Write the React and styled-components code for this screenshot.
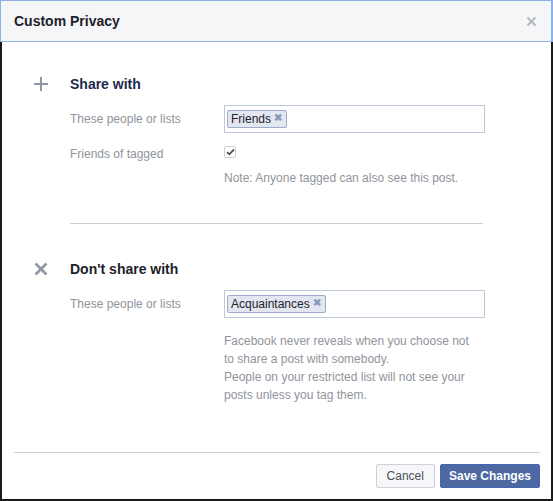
import React from 'react';
import styled, { createGlobalStyle } from 'styled-components';

const GlobalStyle = createGlobalStyle`
  html, body {
    margin: 0;
    padding: 0;
    background: #ffffff;
  }
  body {
    font-family: "Liberation Sans", Arial, Helvetica, sans-serif;
  }
`;

const Dialog = styled.div`
  width: 553px;
  height: 501px;
  box-sizing: border-box;
  display: flex;
  flex-direction: column;
  background: #fff;
`;

const Header = styled.div`
  height: 42px;
  box-sizing: border-box;
  border: 1px solid #8fb1e9;
  border-right-width: 2px;
  background: #f5f6f7;
  display: flex;
  align-items: center;
  justify-content: space-between;
  padding: 0 13px 0 13px;
`;

const HeaderTitle = styled.div`
  font-size: 14px;
  font-weight: bold;
  color: #1d2129;
  margin-top: -1px;
`;

const CloseIcon = styled.svg`
  width: 11px;
  height: 11px;
  margin-right: 1px;
`;

const Body = styled.div`
  flex: 1;
  display: flex;
  flex-direction: column;
  border-left: 2px solid #1a1a1a;
  border-right: 2px solid #1a1a1a;
  border-bottom: 2px solid #1a1a1a;
`;

const Content = styled.div`
  flex: 1;
  padding: 32px 0 0 32px;
`;

const Section = styled.div`
  display: grid;
  grid-template-columns: 36px 154px 261px;
  align-items: start;
  margin-top: ${p => p.$top || 0}px;
`;

const SectionIcon = styled.div`
  height: 20px;
  display: flex;
  align-items: center;
`;

const SectionTitle = styled.div`
  grid-column: 2 / 4;
  font-size: 14px;
  font-weight: bold;
  line-height: 20px;
  color: ${p => p.$dark ? '#1d2129' : '#1d2a4c'};
`;

const Label = styled.div`
  grid-column: 2;
  font-size: 12px;
  color: #90949c;
  line-height: 16px;
  margin-top: ${p => p.$top}px;
`;

const Field = styled.div`
  grid-column: 3;
  margin-top: ${p => p.$top}px;
  height: 28px;
  box-sizing: border-box;
  border: 1px solid #bdc7d8;
  background: #fff;
  display: flex;
  align-items: center;
  padding: 0 2px;
`;

const Token = styled.span`
  display: inline-flex;
  align-items: center;
  height: 18px;
  box-sizing: border-box;
  border: 1px solid #9dacc9;
  border-radius: 2px;
  background: #e2e6f0;
  padding: 0 4px 0 3px;
  font-size: 12px;
  color: #1d2129;
  gap: 3px;
`;

const TokenX = styled.span`
  color: #8b9ab9;
  font-size: 10px;
  font-weight: bold;
  line-height: 1;
  position: relative;
  top: -1px;
`;

const CheckCell = styled.div`
  grid-column: 3;
  margin-top: ${p => p.$top}px;
  height: 16px;
  display: flex;
  align-items: center;
`;

const Checkbox = styled.span`
  width: 12px;
  height: 12px;
  box-sizing: border-box;
  border: 1px solid #ccd0d5;
  border-radius: 2px;
  background: #fff;
  display: flex;
  align-items: center;
  justify-content: center;
`;

const Note = styled.div`
  grid-column: 3;
  margin-top: ${p => p.$top}px;
  font-size: 12px;
  color: #90949c;
  line-height: 18px;
  padding-right: 10px;
`;

const Divider = styled.hr`
  border: 0;
  border-top: 1px solid #ccd0d5;
  margin: ${p => p.$margin};
  width: ${p => p.$width}px;
`;

const Footer = styled.div`
  padding: 0 11px 11px 12px;
`;

const ButtonRow = styled.div`
  display: flex;
  justify-content: flex-end;
  gap: 5px;
  margin-top: 11px;
`;

const Button = styled.button`
  font-family: "Liberation Sans", Arial, Helvetica, sans-serif;
  font-size: 12px;
  font-weight: ${p => p.$primary ? 'bold' : 'normal'};
  height: 24px;
  box-sizing: border-box;
  padding: 0 ${p => p.$primary ? 8 : 10}px;
  border-radius: 2px;
  border: 1px solid ${p => p.$primary ? '#4267b2' : '#ced0d4'};
  background: ${p => p.$primary ? '#4e69a2' : '#f6f7f9'};
  color: ${p => p.$primary ? '#fff' : '#4b4f56'};
  cursor: pointer;
`;

const PlusIcon = () => (
  <svg width="14" height="14" viewBox="0 0 14 14">
    <rect x="6" y="0" width="2" height="14" fill="#9197a3" />
    <rect x="0" y="6" width="14" height="2" fill="#9197a3" />
  </svg>
);

const CrossIcon = () => (
  <svg width="14" height="14" viewBox="0 0 14 14">
    <path d="M1.5 1.5 L12.5 12.5 M12.5 1.5 L1.5 12.5" stroke="#9197a3" strokeWidth="2.8" />
  </svg>
);

const App = () => {
  return (
    <>
      <GlobalStyle />
      <Dialog>
        <Header>
          <HeaderTitle>Custom Privacy</HeaderTitle>
          <CloseIcon viewBox="0 0 11 11">
            <path d="M1.5 1.5 L9.5 9.5 M9.5 1.5 L1.5 9.5" stroke="#b4b8bf" strokeWidth="2" />
          </CloseIcon>
        </Header>
        <Body>
          <Content>
            <Section>
              <SectionIcon><PlusIcon /></SectionIcon>
              <SectionTitle>Share with</SectionTitle>
              <Label $top={17}>These people or lists</Label>
              <Field $top={11}>
                <Token>Friends<TokenX>✖</TokenX></Token>
              </Field>
              <Label $top={13}>Friends of tagged</Label>
              <CheckCell $top={11}>
                <Checkbox>
                  <svg width="9" height="8" viewBox="0 0 9 8">
                    <path d="M1 4.2 L3.4 6.4 L8 1.4" stroke="#4b4f56" strokeWidth="1.7" fill="none" />
                  </svg>
                </Checkbox>
              </CheckCell>
              <Note $top={7}>Note: Anyone tagged can also see this post.</Note>
            </Section>
            <Divider $width={413} $margin="36px 0 0 36px" />
            <Section $top={35}>
              <SectionIcon><CrossIcon /></SectionIcon>
              <SectionTitle $dark>Don't share with</SectionTitle>
              <Label $top={17}>These people or lists</Label>
              <Field $top={11}>
                <Token>Acquaintances<TokenX>✖</TokenX></Token>
              </Field>
              <Note $top={14}>
                Facebook never reveals when you choose not to share a post with somebody.
                <br />
                People on your restricted list will not see your posts unless you tag them.
              </Note>
            </Section>
          </Content>
          <Footer>
            <Divider $width={526} $margin="0" />
            <ButtonRow>
              <Button>Cancel</Button>
              <Button $primary>Save Changes</Button>
            </ButtonRow>
          </Footer>
        </Body>
      </Dialog>
    </>
  );
};

export default App;
